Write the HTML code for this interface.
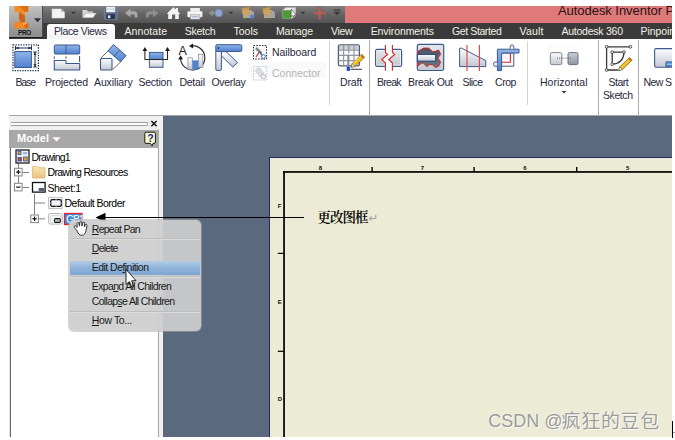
<!DOCTYPE html>
<html lang="zh">
<head>
<meta charset="utf-8">
<title>Autodesk Inventor - 更改图框</title>
<style>
html,body{margin:0;padding:0;background:#fff;}
body{width:675px;height:440px;position:relative;overflow:hidden;font-family:"Liberation Sans","Noto Sans CJK SC",sans-serif;}
#clip{position:absolute;left:9px;top:6px;width:663px;height:431px;overflow:hidden;}
#pg{position:absolute;left:-9px;top:-6px;width:675px;height:440px;}
.a{position:absolute;}
.t{position:absolute;white-space:nowrap;line-height:1;}
u{text-decoration:underline;text-underline-offset:1px;}
</style>
</head>
<body>
<div id="clip"><div id="pg">

<!-- title bar -->
<div class="a" id="tb-dark" style="left:9px;top:6px;width:336px;height:17px;background:linear-gradient(#808080,#666 45%,#545454);"></div>
<div class="a" id="tb-pink" style="left:345px;top:6px;width:330px;height:17px;background:#df7a7b;"></div>
<!-- tab bar -->
<div class="a" id="tabbar" style="left:9px;top:23px;width:666px;height:16px;background:#3a3a3a;"></div>
<div class="a" id="tab-active" style="left:47px;top:24px;width:68px;height:15px;background:linear-gradient(#ffffff,#f3f3f3);border-radius:3px 3px 0 0;"></div>
<!-- app button -->
<div class="a" id="appbtn" style="left:9px;top:6px;width:34px;height:32px;background:linear-gradient(#c2c2c2,#a6a6a6 50%,#8c8c8c);border-right:1px solid #4a4a4a;border-bottom:1px solid #1c1c1c;box-sizing:border-box;"></div>
<svg class="a" style="left:0;top:0" width="675" height="440" viewBox="0 0 675 440"><defs>
<linearGradient id="gb" x1="0" y1="0" x2="0" y2="1"><stop offset="0" stop-color="#8fb4ea"/><stop offset="1" stop-color="#4f82d0"/></linearGradient>
<linearGradient id="gg" x1="0" y1="0" x2="0" y2="1"><stop offset="0" stop-color="#fdfdfe"/><stop offset="1" stop-color="#c2c8d2"/></linearGradient>
<linearGradient id="gd" x1="0" y1="0" x2="0" y2="1"><stop offset="0" stop-color="#c9ced6"/><stop offset="1" stop-color="#8d95a3"/></linearGradient>
<linearGradient id="go" x1="0" y1="0" x2="1" y2="1"><stop offset="0" stop-color="#f79a2e"/><stop offset="1" stop-color="#d9590c"/></linearGradient>
<linearGradient id="gf" x1="0" y1="0" x2="0" y2="1"><stop offset="0" stop-color="#fbe6b4"/><stop offset="1" stop-color="#e9c27c"/></linearGradient>
<linearGradient id="gd2" x1="0" y1="0" x2="0" y2="1"><stop offset="0" stop-color="#e4e6ea"/><stop offset="1" stop-color="#c4c8ce"/></linearGradient>
<linearGradient id="gk" x1="0" y1="0" x2="0" y2="1"><stop offset="0" stop-color="#4a5462"/><stop offset="1" stop-color="#6c7684"/></linearGradient>
</defs><path d="M14.6 6 H28.2 V12 H25 V22.7 H28.2 V28.2 H14.2 V22.7 H19 V12 H14.6 Z" fill="#ee7c1a"/><path d="M19.6 6 L25 12 V16 L19 12 H14.6 V6 Z" fill="#f48c26"/><path d="M19.6 6 H28.2 V12 H25 Z" fill="#e06c14"/><path d="M19 12 L25 16 V22.7 L22.4 22.7 L19 19 Z" fill="#cf6414"/><path d="M19 19 L22.4 22.7 H19 Z" fill="#e67a20"/><path d="M14.2 22.7 H22.4 L25.4 28.2 H14.2 Z" fill="#f28622"/><path d="M22.4 22.7 H28.2 L23.8 25.6 Z" fill="#f9b469"/><path d="M28.2 22.7 V28.2 H25.4 L23.8 25.6 Z" fill="#dd6a12"/><path d="M34 18.3 L41 18.3 L37.5 22.3 Z" fill="#2a2f3c"/><path d="M52 9 L61 9 L64.5 12 L64.5 18 L52 18 Z" fill="#f4f4f4" stroke="#d8d8d8" stroke-width=".6"/><path d="M61 9 L61 12 L64.5 12 Z" fill="#bdbdbd"/><path d="M71 11.8 L76 11.8 L73.5 14.6 Z" fill="#3a3a3a"/><path d="M82.5 10 L87 10 L88 11.5 L93 11.5 L93 17.5 L82.5 17.5 Z" fill="#d8d8d8"/><path d="M85.5 13 L96.5 13 L93 17.8 L82.5 17.8 Z" fill="#f5f5f5" stroke="#8a8a8a" stroke-width=".5"/><rect x="104.3" y="6.4" width="12.8" height="13" rx="1" fill="#5a6c8c" stroke="#8c98ae" stroke-width=".6"/><rect x="106.2" y="6.8" width="9" height="5.4" fill="#eef0f4"/><rect x="106.2" y="8.6" width="9" height="1" fill="#c4cad6"/><rect x="106.6" y="14.2" width="8.2" height="5" fill="#27344e"/><rect x="108" y="15.4" width="2.4" height="2.8" fill="#e6e9ef"/><path d="M125 13 L130.5 8.8 L130.5 11.3 L134 11.3 Q137.5 11.5 137.5 15 L137.5 17.5 L134.8 17.5 L134.8 15.6 Q134.8 14.6 133.6 14.6 L130.5 14.6 L130.5 17.2 Z" fill="#a9a9a9"/><path d="M158.5 13 L153 8.8 L153 11.3 L149.5 11.3 Q146 11.5 146 15 L146 17.5 L148.7 17.5 L148.7 15.6 Q148.7 14.6 149.9 14.6 L153 14.6 L153 17.2 Z" fill="#8e8e8e"/><path d="M166.6 13.8 L173.5 7.2 L176 9.6 L176 8 L178 8 L178 11.5 L180.4 13.8 L178.8 13.8 L178.8 19 L175.2 19 L175.2 14.6 L172 14.6 L172 19 L168.2 19 L168.2 13.8 Z" fill="#f3f3f3"/><rect x="190.3" y="8" width="9.6" height="3.6" fill="#efefef"/><rect x="187.4" y="11.2" width="15" height="6" rx="1.2" fill="#f6f6f6"/><rect x="190.3" y="14.8" width="9.6" height="4.4" fill="#e4e8ee" stroke="#8a8f98" stroke-width=".6"/><rect x="191.6" y="16.4" width="7" height=".8" fill="#8aa0c4"/><path d="M208.5 13 L213 9.6 L213 11.8 L216 11.8 L216 14.2 L213 14.2 L213 16.4 Z" fill="#8e8e8e"/><circle cx="218.7" cy="13" r="3.8" fill="#93a6cc" stroke="#7388b8" stroke-width="1"/><path d="M228.6 11.8 L233.2 11.8 L230.9 14.4 Z" fill="#3a3a3a"/><path d="M243 10 L251 10 L254 12.5 L254 18 L243 18 Z" fill="#a4a4a4"/><path d="M242 8.5 L249.5 7.5 L247.5 11.5 L251 11 L245 18.5 L246.5 13.5 L242.5 14 Z" fill="#d8a455" stroke="#e2a030" stroke-width=".5" fill-opacity=".75"/><path d="M264 10 L272 10 L275 12.5 L275 18 L264 18 Z" fill="#a4a4a4"/><path d="M263 8.5 L270.5 7.5 L268.5 11.5 L272 11 L266 18.5 L267.5 13.5 L263.5 14 Z" fill="#d8a455" stroke="#e2a030" stroke-width=".5" fill-opacity=".75"/><path d="M250.5 15 L253.5 15 L253.5 18.8 L250.5 18.8 Z" fill="#4f7ac4"/><path d="M282.5 10 L286 7.5 L295.5 7.5 L295.5 16 L291.5 18.6 L282.5 18.6 Z" fill="#eaeaea"/><rect x="282.5" y="10.2" width="8.5" height="8.4" fill="#4e9a3a"/><path d="M291 10.2 L295.5 7.6 L295.5 16 L291 18.6 Z" fill="#d6d6d6"/><path d="M291.3 9 L291.3 17 L293 15.4 L294.2 18 L295.2 17.5 L294 15 L296 15 Z" fill="#fff" stroke="#222" stroke-width=".5"/><path d="M300.6 11.8 L305.2 11.8 L302.9 14.4 Z" fill="#3a3a3a"/><path d="M318.3 7 L320.9 7 L320.9 11.9 L326 11.9 L326 14.3 L320.9 14.3 L320.9 19.4 L318.3 19.4 L318.3 14.3 L313.2 14.3 L313.2 11.9 L318.3 11.9 Z" fill="#b46260" stroke="#9c4a48" stroke-width=".5"/><rect x="333.6" y="9.4" width="6.8" height="1.2" fill="#3a3a3a"/><path d="M333.6 11.8 L340.4 11.8 L337 15.2 Z" fill="#3a3a3a"/></svg>
<span class="t" id="l0" style="left:558px;top:3.60px;font-size:13px;color:#2a1214;letter-spacing:-0.050px;">Autodesk Inventor Professional</span>
<span class="t" id="l1" style="left:18px;top:29.80px;font-size:6.5px;color:#151515;font-weight:bold;letter-spacing:-0.347px;">PRO</span>
<span class="t" id="l2" style="left:54px;top:25.51px;font-size:10.5px;color:#2a2a44;letter-spacing:-0.402px;">Place Views</span>
<span class="t" id="l3" style="left:124.5px;top:25.51px;font-size:10.5px;color:#f4f1e6;letter-spacing:0.065px;">Annotate</span>
<span class="t" id="l4" style="left:184.8px;top:25.51px;font-size:10.5px;color:#f4f1e6;letter-spacing:-0.282px;">Sketch</span>
<span class="t" id="l5" style="left:233.5px;top:25.51px;font-size:10.5px;color:#f4f1e6;letter-spacing:-0.004px;">Tools</span>
<span class="t" id="l6" style="left:276px;top:25.51px;font-size:10.5px;color:#f4f1e6;letter-spacing:-0.191px;">Manage</span>
<span class="t" id="l7" style="left:331px;top:25.51px;font-size:10.5px;color:#f4f1e6;letter-spacing:-0.293px;">View</span>
<span class="t" id="l8" style="left:370.7px;top:25.51px;font-size:10.5px;color:#f4f1e6;letter-spacing:-0.091px;">Environments</span>
<span class="t" id="l9" style="left:452px;top:25.51px;font-size:10.5px;color:#f4f1e6;letter-spacing:-0.390px;">Get Started</span>
<span class="t" id="l10" style="left:519.6px;top:25.51px;font-size:10.5px;color:#f4f1e6;letter-spacing:0.161px;">Vault</span>
<span class="t" id="l11" style="left:561.4px;top:25.51px;font-size:10.5px;color:#f4f1e6;letter-spacing:-0.238px;">Autodesk 360</span>
<span class="t" id="l12" style="left:640.6px;top:25.51px;font-size:10.5px;color:#f4f1e6;letter-spacing:-0.079px;">Pinpoint</span>

<!-- ribbon -->
<div class="a" id="ribbon" style="left:9px;top:39px;width:666px;height:77px;background:#fff;"></div>
<div class="a" style="left:9px;top:115px;width:666px;height:1px;background:#a6a6a6;"></div>
<div class="a" style="left:329px;top:41px;width:1px;height:64px;background:#d4d4d4;"></div>
<div class="a" style="left:369px;top:40px;width:1px;height:75px;background:#a9a9a9;"></div>
<div class="a" style="left:527px;top:41px;width:1px;height:64px;background:#d4d4d4;"></div>
<div class="a" style="left:598px;top:40px;width:1px;height:75px;background:#a9a9a9;"></div>
<div class="a" style="left:638px;top:40px;width:1px;height:75px;background:#a9a9a9;"></div>
<svg class="a" style="left:0;top:0" width="675" height="440" viewBox="0 0 675 440"><rect x="13" y="44.8" width="25.4" height="25.8" fill="#fff" stroke="#1d2c4c" stroke-width="1.3" stroke-dasharray="1.3 1.24"/><rect x="14.8" y="51.5" width="16.6" height="16" fill="url(#gb)" stroke="#3d5a8c" stroke-width="1"/><path d="M15.5 48 H31.5 M15.5 46 V50 M31.5 46 V50 M35 52 V67 M33.2 52 H36.8 M33.2 67 H36.8" stroke="#1d2c4c" stroke-width="1" fill="none"/><path d="M15.8 48 L18.6 46.4 L18.6 49.6 Z M31.2 48 L28.4 46.4 L28.4 49.6 Z M35 52.3 L33.5 55 L36.5 55 Z M35 66.7 L33.5 64 L36.5 64 Z" fill="#1d2c4c"/><rect x="54.3" y="45" width="25.4" height="9" rx="1" fill="url(#gb)" stroke="#3d5a8c" stroke-width="1"/><path d="M66 45 V54" stroke="#3d5a8c" stroke-width="1"/><path d="M54.3 60.5 H66 V63.5 H79.7 V70 H54.3 Z" fill="url(#gg)" stroke="#3d5a8c" stroke-width="1.1" stroke-linejoin="round"/><path d="M54.3 56.4 V58.6 M66 56.4 V58.6 M79.6 56 V62" stroke="#333" stroke-width=".9"/><rect x="100.5" y="58.5" width="11.5" height="11.5" rx="1" fill="url(#gg)" stroke="#3d5a8c" stroke-width="1.1"/><path d="M101 58 L110.5 48.5 M112.5 69.8 L122 60.5" stroke="#444" stroke-width=".8"/><path d="M113.5 44.6 L126 55.6 L120.5 61.8 L108 50.8 Z" fill="url(#gb)" stroke="#3d5a8c" stroke-width="1"/><path d="M119.6 50 L114.2 56.2" stroke="#3d5a8c" stroke-width=".9"/><rect x="149.4" y="52.4" width="13.6" height="7.2" fill="url(#gb)" stroke="#3d5a8c" stroke-width="1"/><rect x="149.4" y="59.6" width="13.6" height="7.7" fill="url(#gg)" stroke="#3d5a8c" stroke-width="1"/><path d="M144.9 50 V59.5 H167.5 V50" stroke="#2a2a2a" stroke-width="1.1" fill="none"/><path d="M144.9 47 L142.5 51 L147.3 51 Z M167.5 47 L165.1 51 L169.9 51 Z" fill="#1a1a1a"/><path d="M191.6 45.65 A12.2 12.2 0 1 1 180.5 58.8" fill="none" stroke="#2b2b2b" stroke-width="1.15"/><path d="M189 45.9 L193 43.5 L193.2 48.4 Z M180.6 55.2 L178.2 59.4 L183 59.2 Z" fill="#1a1a1a"/><text x="178.4" y="54.5" font-family="Liberation Sans, sans-serif" font-size="12.5" fill="#222">A</text><rect x="187.9" y="57.8" width="4.4" height="11.6" fill="url(#gg)" stroke="#7b8494" stroke-width=".7"/><rect x="192.5" y="60.4" width="5.6" height="9.4" fill="#4f82d0"/><rect x="198.3" y="54.4" width="4.6" height="13" fill="url(#gg)" stroke="#7b8494" stroke-width=".7"/><path d="M221.4 51.6 L226 51.6 L237.6 62.6 L232.8 67 L221.4 55.8 Z" fill="url(#gg)" stroke="#3d5a8c" stroke-width="1" stroke-linejoin="round"/><rect x="215.8" y="50" width="5.6" height="20.4" rx="1" fill="url(#gg)" stroke="#3d5a8c" stroke-width="1"/><rect x="215.8" y="44.7" width="26" height="6.8" rx="1.2" fill="url(#gb)" stroke="#3d5a8c" stroke-width="1"/><circle cx="218.4" cy="48" r=".9" fill="#1d2c4c"/><rect x="248" y="62" width="78" height="15.6" fill="#f9f9fa"/><rect x="253.5" y="45.5" width="13" height="13.6" fill="#f7f7f7" stroke="#222" stroke-width="1" stroke-dasharray="1.5 1.3"/><path d="M256 48 L261.5 53.5" stroke="#8a8a8a" stroke-width="2.6"/><path d="M256 57 L259.4 51.8" stroke="#d43a2e" stroke-width="1.2"/><path d="M259.6 51.6 L262.6 56.4" stroke="#3a66c4" stroke-width="1.2"/><circle cx="263.4" cy="56.6" r="1.9" fill="#fff" stroke="#3a66c4" stroke-width="1"/><rect x="253.5" y="66.5" width="13" height="13.6" fill="#fbfbfb" stroke="#a9c3e6" stroke-width=".9" stroke-dasharray="1.5 1.3"/><path d="M255 70.5 L258.8 67.2 L264 73.2 L260 76.6 Z" fill="#dcdcdc" stroke="#c4c4c4" stroke-width=".6"/><circle cx="263.4" cy="76.6" r="2.3" fill="#f0f0f0" stroke="#b8b8b8" stroke-width=".9"/><rect x="338.4" y="44.8" width="21" height="21" rx="1.6" fill="#fafbfc" stroke="#555b66" stroke-width="1.3"/><rect x="339" y="45.4" width="19.8" height="4.6" fill="#b4bac4" opacity=".7"/><path d="M338.6 50.2 H359.2 M338.6 55.4 H359.2 M338.6 60.6 H359.2 M343.6 45 V65.6 M348.8 45 V65.6 M354 45 V65.6" stroke="#9097a3" stroke-width="1.1"/><path d="M348.2 54 V67" stroke="#8a909a" stroke-width="1.8"/><path d="M347 54 H350" stroke="#fff" stroke-width="1"/><path d="M361.6 54.2 L364.6 57.2 L355 66.4 L351.2 67.4 L352.2 63.6 Z" fill="#f4c220" stroke="#6b5a1a" stroke-width=".7"/><path d="M351.2 67.4 L352.2 63.6 L355 66.4 Z" fill="#f6ecd8" stroke="#444" stroke-width=".5"/><path d="M360 55.8 L363 58.8 L364.6 57.2 L361.6 54.2 Z" fill="#c8702c"/><path d="M353.4 63 L361 55.6" stroke="#fbe28a" stroke-width="1"/><rect x="346.7" y="66.9" width="3.2" height="4" fill="#1448c0"/><path d="M350.6 69.3 H362" stroke="#444" stroke-width="1.1"/><rect x="375.6" y="49.3" width="26" height="17" rx="1.6" fill="url(#gd2)" stroke="#3d5a8c" stroke-width="1.2"/><rect x="376.8" y="50.5" width="23.6" height="14.6" fill="none" stroke="#fff" stroke-width=".8" opacity=".8"/><path d="M385.45 48 V52.5 L387.6 54.4 L381.8 59.5 L385.45 63.1 V68 H392.4 V63.1 L388.8 59.5 L394.6 54.4 L392.4 52.5 V48 Z" fill="#fff"/><path d="M385.45 44.9 V52.5 L387.6 54.4 L381.8 59.5 L385.45 63.1 V70.7 M392.4 44.9 V52.5 L394.6 54.4 L388.8 59.5 L392.4 63.1 V70.7" fill="none" stroke="#d62626" stroke-width="1.1" stroke-linejoin="miter"/><rect x="417.3" y="44.3" width="26.4" height="26.2" rx="1.8" fill="url(#gd2)" stroke="#3d5a8c" stroke-width="1.2"/><path d="M417.6 51.6 L423.6 48.1 L428.6 48.1 L432.5 51.6 L435.2 51.6 L436.7 50.4 L439 50.4 L440.6 54.3 L437.9 58.1 L440.6 62 L438.6 66.3 L435.2 67.4 L432.5 64.7 L429.4 64.7 L426.7 66.6 L423.6 63.2 L421.3 63.2 L417.6 66.3 Z" fill="url(#gk)" stroke="#d62626" stroke-width="1" stroke-linejoin="round"/><rect x="417.4" y="54.4" width="18.2" height="6.8" fill="url(#gg)" stroke="#2e4a7c" stroke-width="1.1"/><path d="M459.6 48.2 H461.6 L485.8 60.6 V66.6 H459.6 Z" fill="url(#gg)" stroke="#3d5a8c" stroke-width="1" stroke-linejoin="round"/><path d="M467 45 V71 M479.4 45 V71" stroke="#dc4c4e" stroke-width="1.2"/><path d="M501.6 53 H513.8 V66.2 H501.6" fill="#f6f7fa" stroke="#4a5a7c" stroke-width="1"/><path d="M502 62.3 H510.4 V53.4" fill="none" stroke="#d42a2a" stroke-width="1.1"/><path d="M497.4 49.2 H519 V53 H501.6 V70.6 H497.4 Z" fill="url(#gb)" stroke="#3d5a8c" stroke-width="1" stroke-linejoin="round"/><path d="M510.2 49 V45.8 Q512 43.8 513.8 45.8 V49" fill="#e8ecf4" stroke="#3d5a8c" stroke-width=".9"/><path d="M497.2 62 H494.2 Q492.6 64.1 494.2 66.2 H497.2" fill="#e8ecf4" stroke="#3d5a8c" stroke-width=".9"/><rect x="547.5" y="44" width="31" height="27" fill="#fcfcfc"/><rect x="550.4" y="52.6" width="11.4" height="12" rx="1.5" fill="url(#gg)" stroke="#7f8796" stroke-width="1"/><rect x="568" y="52.6" width="10" height="12" rx="1.5" fill="url(#gd)" stroke="#6b7382" stroke-width="1"/><path d="M557 58.2 H571" stroke="#555" stroke-width="1" stroke-dasharray="1 1.2"/><path d="M561.6 91 L566.4 91 L564 93.6 Z" fill="#333"/><path d="M606.6 46.8 H630.4 M606.6 46.8 V70 H618" fill="none" stroke="#3a3a3a" stroke-width="1.3"/><path d="M612.2 52.2 H624 Q623.6 63.4 612.2 64.2 Z" fill="#fcfcfc" stroke="#3a3a3a" stroke-width="1.3"/><circle cx="606.6" cy="46.8" r="1.4" fill="#e8e8e8" stroke="#333" stroke-width=".8"/><circle cx="630.4" cy="46.8" r="1.4" fill="#e8e8e8" stroke="#333" stroke-width=".8"/><circle cx="606.6" cy="70" r="1.4" fill="#e8e8e8" stroke="#333" stroke-width=".8"/><circle cx="612.2" cy="52.2" r="1.4" fill="#e8e8e8" stroke="#333" stroke-width=".8"/><circle cx="624" cy="52.2" r="1.4" fill="#e8e8e8" stroke="#333" stroke-width=".8"/><circle cx="612.2" cy="64.2" r="1.4" fill="#e8e8e8" stroke="#333" stroke-width=".8"/><path d="M629.6 57.4 L632.2 60 L622.6 69.4 L618.6 70.6 L619.8 66.8 Z" fill="#f2c12a" stroke="#6b5a1a" stroke-width=".7"/><path d="M618.6 70.6 L619.8 66.8 L622.6 69.4 Z" fill="#f4ead4" stroke="#444" stroke-width=".5"/><path d="M628 59 L630.6 61.6 L632.2 60 L629.6 57.4 Z" fill="#c7762c"/><rect x="654.6" y="48.6" width="26" height="18.6" rx="1.5" fill="url(#gg)" stroke="#3d5a8c" stroke-width="1.1"/><rect x="665.8" y="61.8" width="9" height="5" fill="#4f82d0" stroke="#3d5a8c" stroke-width=".6"/><path d="M667 64.2 H674" stroke="#dfe8f8" stroke-width=".8"/></svg>
<span class="t" id="l13" style="left:15.5px;top:76.51px;font-size:10.5px;color:#26263a;letter-spacing:-1.146px;">Base</span>
<span class="t" id="l14" style="left:45px;top:76.51px;font-size:10.5px;color:#26263a;letter-spacing:-0.170px;">Projected</span>
<span class="t" id="l15" style="left:94px;top:76.51px;font-size:10.5px;color:#26263a;letter-spacing:-0.123px;">Auxiliary</span>
<span class="t" id="l16" style="left:138.5px;top:76.51px;font-size:10.5px;color:#26263a;letter-spacing:-0.255px;">Section</span>
<span class="t" id="l17" style="left:179.4px;top:76.51px;font-size:10.5px;color:#26263a;letter-spacing:-0.252px;">Detail</span>
<span class="t" id="l18" style="left:211.5px;top:76.51px;font-size:10.5px;color:#26263a;letter-spacing:-0.315px;">Overlay</span>
<span class="t" id="l19" style="left:272px;top:47.11px;font-size:10.5px;color:#26263a;letter-spacing:-0.069px;">Nailboard</span>
<span class="t" id="l20" style="left:272px;top:68.01px;font-size:10.5px;color:#b4b4b8;letter-spacing:0.006px;">Connector</span>
<span class="t" id="l21" style="left:340px;top:76.51px;font-size:10.5px;color:#26263a;letter-spacing:-0.141px;">Draft</span>
<span class="t" id="l22" style="left:377px;top:76.51px;font-size:10.5px;color:#26263a;letter-spacing:-0.734px;">Break</span>
<span class="t" id="l23" style="left:408px;top:76.51px;font-size:10.5px;color:#26263a;letter-spacing:-0.285px;">Break Out</span>
<span class="t" id="l24" style="left:462.5px;top:76.51px;font-size:10.5px;color:#26263a;letter-spacing:-0.566px;">Slice</span>
<span class="t" id="l25" style="left:495px;top:76.51px;font-size:10.5px;color:#26263a;letter-spacing:-0.455px;">Crop</span>
<span class="t" id="l26" style="left:540px;top:76.51px;font-size:10.5px;color:#26263a;letter-spacing:0.024px;">Horizontal</span>
<span class="t" id="l27" style="left:608.4px;top:76.51px;font-size:10.5px;color:#26263a;letter-spacing:-0.447px;">Start</span>
<span class="t" id="l28" style="left:603px;top:89.61px;font-size:10.5px;color:#26263a;letter-spacing:-0.422px;">Sketch</span>
<span class="t" id="l29" style="left:643.5px;top:76.51px;font-size:10.5px;color:#26263a;letter-spacing:-0.609px;">New Sheet</span>

<!-- canvas -->
<div class="a" id="canvas" style="left:163px;top:116px;width:512px;height:324px;background:#5a697e;"></div>
<!-- sheet -->
<div class="a" id="sheet" style="left:269px;top:157px;width:406px;height:283px;background:#ecebd5;border-left:1px solid #2a2a5a;border-top:1px solid #2a2a5a;box-sizing:border-box;"></div>
<svg class="a" style="left:0;top:0" width="675" height="440" viewBox="0 0 675 440">
<rect x="283.2" y="171.1" width="392" height="1.7" fill="#000"/>
<rect x="283.2" y="171.1" width="1.7" height="269" fill="#000"/>
<rect x="371.4" y="167" width="1.4" height="5" fill="#000"/>
<rect x="473.4" y="167" width="1.4" height="5" fill="#000"/>
<rect x="576" y="167" width="1.4" height="5" fill="#000"/>
<rect x="277.8" y="252.8" width="6" height="1.2" fill="#000"/>
<rect x="277.8" y="350.7" width="6" height="1.2" fill="#000"/>
</svg>
<span class="t" id="l42" style="left:318.7px;top:165.22px;font-size:6px;color:#111;font-weight:bold;letter-spacing:0.000px;">8</span>
<span class="t" id="l43" style="left:420.7px;top:165.22px;font-size:6px;color:#111;font-weight:bold;letter-spacing:0.000px;">7</span>
<span class="t" id="l44" style="left:523.2px;top:165.22px;font-size:6px;color:#111;font-weight:bold;letter-spacing:0.000px;">6</span>
<span class="t" id="l45" style="left:625.9000000000001px;top:165.22px;font-size:6px;color:#111;font-weight:bold;letter-spacing:0.000px;">5</span>
<span class="t" id="l46" style="left:277.8px;top:203.12px;font-size:6px;color:#111;font-weight:bold;letter-spacing:0.000px;">F</span>
<span class="t" id="l47" style="left:277.8px;top:299.42px;font-size:6px;color:#111;font-weight:bold;letter-spacing:0.000px;">E</span>
<span class="t" id="l48" style="left:277.8px;top:395.92px;font-size:6px;color:#111;font-weight:bold;letter-spacing:0.000px;">D</span>
<span class="t" id="l49" style="left:317.3px;top:211.17px;font-size:13.5px;color:#000;font-weight:600;font-family:'Liberation Serif','Noto Serif CJK SC',serif;letter-spacing:-0.900px;">更改图框</span>
<span class="t" id="l50" style="left:368.3px;top:212.44px;font-size:12px;color:#a4a4a4;font-family:'DejaVu Sans',sans-serif;letter-spacing:0.000px;">↵</span>

<!-- browser panel -->
<div class="a" id="panel" style="left:9px;top:116px;width:154px;height:324px;background:#f1f1f1;"></div>
<div class="a" style="left:11px;top:122px;width:136px;height:1px;background:#9e9e9e;"></div>
<div class="a" style="left:11px;top:123px;width:136px;height:2px;background:#fbfbfb;"></div>
<div class="a" style="left:11px;top:125px;width:136px;height:1px;background:#9e9e9e;"></div>
<div class="a" style="left:147px;top:122px;width:1px;height:4px;background:#b0b0b0;"></div>
<div class="a" id="phead" style="left:9px;top:130px;width:150px;height:18px;background:#a8a8a8;"></div>
<div class="a" id="tree" style="left:9px;top:148px;width:150px;height:292px;background:#fff;border-left:2px solid #6a6a6a;border-right:1px solid #a8a8a8;box-sizing:border-box;"></div>
<div class="a" style="left:9px;top:148px;width:1px;height:292px;background:#e0e0e0;"></div>
<svg class="a" style="left:0;top:0" width="675" height="440" viewBox="0 0 675 440"><path d="M151.4 121 L156.6 126.2 M156.6 121 L151.4 126.2" stroke="#111" stroke-width="1.5"/><path d="M52.4 137.3 L60.6 137.3 L56.5 141.6 Z" fill="#fff"/><path d="M146 132.2 H154 Q155.4 132.2 155.4 133.6 V142 Q155.4 143.4 154 143.4 H153 L152 146 L150.4 143.4 H146 Q144.8 143.4 144.8 142 V133.6 Q144.8 132.2 146 132.2 Z" fill="#fdfdc8" stroke="#1a1a1a" stroke-width="1"/><text x="147.3" y="142" font-family="Liberation Sans, sans-serif" font-size="10.5" font-weight="bold" fill="#1c1ca8">?</text><path d="M18.5 163 V168 M18.5 176 V183 M22.5 172.5 H29 M22.5 187.5 H29 M34.5 194 V215 M34.5 203 H45 M38.5 218.8 H45" stroke="#808080" stroke-width="1" fill="none"/><rect x="14.5" y="168.3" width="7.6" height="7.6" fill="#fff" stroke="#848484" stroke-width="1"/><path d="M16.1 172.10000000000002 H20.5" stroke="#000" stroke-width="1.1"/><path d="M18.3 169.9 V174.3" stroke="#000" stroke-width="1.1"/><rect x="14.5" y="183.3" width="7.6" height="7.6" fill="#fff" stroke="#848484" stroke-width="1"/><path d="M16.1 187.10000000000002 H20.5" stroke="#000" stroke-width="1.1"/><rect x="30.8" y="215" width="7.6" height="7.6" fill="#fff" stroke="#848484" stroke-width="1"/><path d="M32.4 218.8 H36.8" stroke="#000" stroke-width="1.1"/><path d="M34.6 216.6 V221" stroke="#000" stroke-width="1.1"/><rect x="16" y="150" width="13" height="13" fill="#eaf1fb" stroke="#111" stroke-width="1.2"/><rect x="18" y="151.6" width="3" height="3" fill="#f0a020" stroke="#2b4fae" stroke-width=".8"/><rect x="18" y="157.4" width="3.4" height="3.6" fill="#d8401c" stroke="#2b4fae" stroke-width=".8"/><rect x="23.6" y="157" width="3.6" height="4" fill="#f0a020" stroke="#2b4fae" stroke-width=".8"/><rect x="23" y="152" width="4" height="2.4" fill="#9dbbe8"/><path d="M32.6 166.4 H37.6 L39 167.8 H45 V178 H32.6 Z" fill="url(#gf)" stroke="#dcb36a" stroke-width=".8"/><rect x="32.5" y="182.5" width="12.6" height="9.6" fill="#fff" stroke="#111" stroke-width="1.3"/><rect x="38.6" y="188" width="5.4" height="3" fill="#55607a"/><rect x="48.6" y="197.3" width="13.6" height="11.2" fill="#f6f6f6" stroke="#b4b4b4" stroke-width=".8"/><rect x="50.7" y="199.6" width="10.6" height="6.8" rx="1.6" fill="#eef3fb" stroke="#111" stroke-width="1.3"/><path d="M55.6 199.6 H56.6 M55.6 206.4 H56.6 M50.7 202.6 V203.4 M61.3 202.6 V203.4" stroke="#ddd" stroke-width="1.5" opacity=".8"/><rect x="48.6" y="213.5" width="13.6" height="10.6" rx="1.6" fill="#f8f8f8" stroke="#b0b0b0" stroke-width=".9"/><rect x="50.6" y="215.6" width="10" height="7" rx="1" fill="none" stroke="#cfcfcf" stroke-width=".8"/><rect x="54.4" y="218.6" width="6" height="3.8" rx="1.2" fill="#b8bcc4" stroke="#1a1a1a" stroke-width="1.1"/><rect x="64.5" y="213.5" width="17.5" height="11" fill="#3a8ee6" stroke="#e8202a" stroke-width="1.3"/></svg>
<span class="t" id="l30" style="left:17px;top:133.39px;font-size:11px;color:#fff;font-weight:bold;letter-spacing:0.055px;">Model</span>
<span class="t" id="l31" style="left:31.5px;top:151.51px;font-size:10.5px;color:#000;letter-spacing:-0.737px;">Drawing1</span>
<span class="t" id="l32" style="left:47.5px;top:167.11px;font-size:10.5px;color:#000;letter-spacing:-0.683px;">Drawing Resources</span>
<span class="t" id="l33" style="left:47.5px;top:182.71px;font-size:10.5px;color:#000;letter-spacing:-0.451px;">Sheet:1</span>
<span class="t" id="l34" style="left:64.5px;top:198.21px;font-size:10.5px;color:#000;letter-spacing:-0.516px;">Default Border</span>
<span class="t" id="l35" style="left:66px;top:213.71px;font-size:10.5px;color:#fff;letter-spacing:-1.200px;">GB1</span>

<!-- arrow annotation -->
<div class="a" style="left:104px;top:217px;width:200px;height:1px;background:#000;"></div>
<svg class="a" style="left:95px;top:212px" width="11" height="11" viewBox="0 0 11 11"><path d="M0.5 5.5 L10.5 0.8 L10.5 10.2 Z" fill="#000"/></svg>

<!-- context menu -->
<div class="a" id="menu" style="left:69px;top:220px;width:132px;height:111px;background:rgba(205,205,205,0.93);border-radius:5px;box-shadow:0 0 0 1px rgba(170,170,170,0.5);"></div>
<div class="a" style="left:70px;top:238px;width:130px;height:1px;background:#bdbdbd;"></div>
<div class="a" style="left:70px;top:239px;width:130px;height:1px;background:#dcdcdc;"></div>
<div class="a" id="mhl" style="left:70px;top:261px;width:130px;height:14px;background:linear-gradient(#b4cde6,#8fb2d8 50%,#7fa6d2);"></div>
<div class="a" style="left:70px;top:276px;width:130px;height:1px;background:#bdbdbd;"></div>
<div class="a" style="left:70px;top:277px;width:130px;height:1px;background:#dcdcdc;"></div>
<div class="a" style="left:70px;top:311px;width:130px;height:1px;background:#bdbdbd;"></div>
<div class="a" style="left:70px;top:312px;width:130px;height:1px;background:#dcdcdc;"></div>
<svg class="a" style="left:0;top:0" width="675" height="440" viewBox="0 0 675 440"><g transform="translate(80.6 228.4) scale(1.28) translate(-80 -226.4)"><path d="M77.4 228.6 L75.2 225.8 Q74.4 224.4 75.8 224.4 L77.4 225.6 L77.2 222.4 Q77.6 221.4 78.6 222.2 L79.2 224.6 L79.4 221.4 Q80.2 220.4 80.9 221.4 L81.1 224.6 L81.7 221.8 Q82.6 221 83.2 222 L82.9 225.2 L83.8 223.4 Q84.8 222.8 85 224 L84.2 228.2 Q83.6 231.6 81 231.8 Q78.4 231.8 77.4 228.6 Z" fill="#fff" stroke="#222" stroke-width=".7" stroke-linejoin="round"/></g><path d="M126 269.4 V284.6 L129.4 281.6 L131.8 287.4 L134 286.4 L131.6 280.8 L136 280.6 Z" fill="#fff" stroke="#111" stroke-width=".9" stroke-linejoin="round"/></svg>
<span class="t" id="l36" style="left:91.8px;top:224.11px;font-size:10.5px;color:#1a1a1a;letter-spacing:-0.741px;"><u>R</u>epeat Pan</span>
<span class="t" id="l37" style="left:91.8px;top:243.31px;font-size:10.5px;color:#1a1a1a;letter-spacing:-0.752px;"><u>D</u>elete</span>
<span class="t" id="l38" style="left:91.8px;top:262.11px;font-size:10.5px;color:#1a1a1a;letter-spacing:-0.543px;">Edit De<u>f</u>inition</span>
<span class="t" id="l39" style="left:91.8px;top:281.11px;font-size:10.5px;color:#1a1a1a;letter-spacing:-0.647px;">Expa<u>n</u>d All Children</span>
<span class="t" id="l40" style="left:91.8px;top:296.11px;font-size:10.5px;color:#1a1a1a;letter-spacing:-0.680px;">Collap<u>s</u>e All Children</span>
<span class="t" id="l41" style="left:91.8px;top:315.41px;font-size:10.5px;color:#1a1a1a;letter-spacing:-0.397px;"><u>H</u>ow To...</span>

<span class="t" id="l51" style="left:488.3px;top:411.96px;font-size:18px;color:#9a9a9a;letter-spacing:-0.016px;text-shadow:1px 1px 0 rgba(255,255,255,.9), -1px -1px 0 rgba(255,255,255,.3);">CSDN @</span>
<span class="t" id="l52" style="left:561.5px;top:411.52px;font-size:19px;color:#9c9c9c;letter-spacing:0.696px;text-shadow:1px 1px 0 rgba(255,255,255,.9), -1px -1px 0 rgba(255,255,255,.3);">疯狂的豆包</span>
</div></div>
<!-- word cursor mark outside screenshot -->
<div class="a" style="left:672px;top:421px;width:1px;height:17px;background:#000;"></div>
<div class="a" style="left:673px;top:432px;width:2px;height:1px;background:#999;"></div>
</body>
</html>
